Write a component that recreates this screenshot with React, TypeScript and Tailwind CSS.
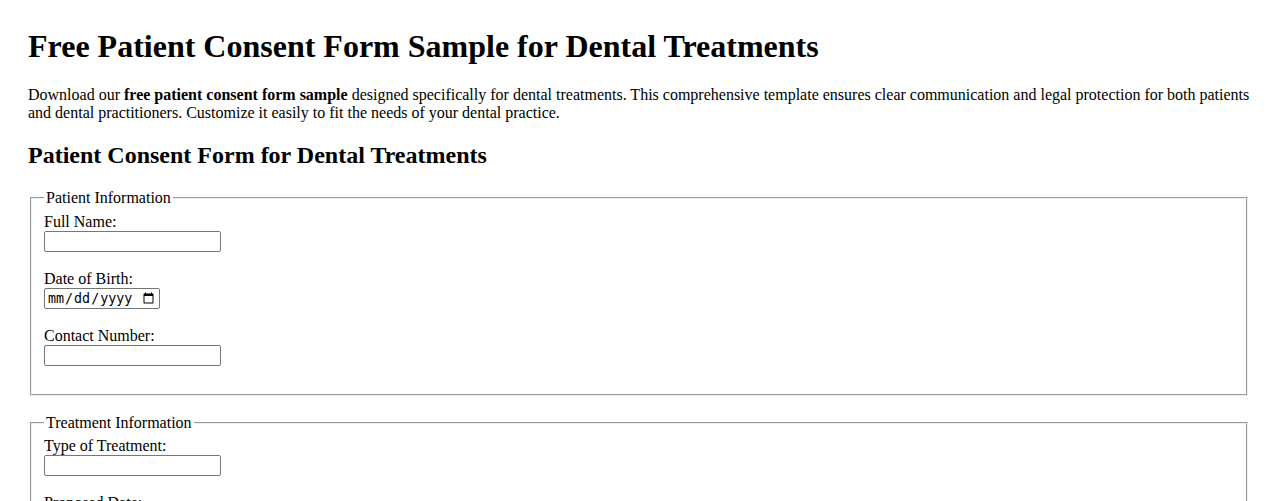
import React from "react";

const textInput =
  "inline-block align-baseline w-[177px] h-[21px] border border-[#767676] rounded-[2px] bg-white px-[2px] py-[1px] text-[13.333px] font-['Liberation_Sans',Arial,sans-serif]";
const dateInput =
  "inline-block align-baseline w-[116px] h-[21px] border border-[#767676] rounded-[2px] bg-white px-[2px] py-[1px] text-[13.333px] font-['DejaVu_Sans_Mono',monospace] text-black";
const fieldsetCls =
  "mx-[2px] border-2 [border-style:groove] border-[color:ThreeDFace] pt-[5.6px] px-[12px] pb-[10px] min-w-min";

export default function App() {
  return (
    <div className="bg-white text-black font-['Liberation_Serif','Times_New_Roman',serif] text-[16px] leading-[normal] px-[28px] pt-[28px] pb-[28px] min-h-screen">
      <h1 className="text-[32px] font-bold mb-[21.44px]">
        Free Patient Consent Form Sample for Dental Treatments
      </h1>
      <p>
        Download our <strong className="font-bold">free patient consent form sample</strong> designed
        specifically for dental treatments. This comprehensive template ensures clear communication and
        legal protection for both patients and dental practitioners. Customize it easily to fit the needs
        of your dental practice.
      </p>
      <h2 className="text-[24px] font-bold mt-[19.92px] mb-[19.92px]">
        Patient Consent Form for Dental Treatments
      </h2>
      <form>
        <fieldset className={fieldsetCls}>
          <legend className="px-[2px]">Patient Information</legend>
          <label htmlFor="fullName">Full Name:</label>
          <br />
          <input id="fullName" type="text" className={textInput} />
          <br />
          <br />
          <label htmlFor="dob">Date of Birth:</label>
          <br />
          <input id="dob" type="date" className={dateInput} />
          <br />
          <br />
          <label htmlFor="contact">Contact Number:</label>
          <br />
          <input id="contact" type="tel" className={textInput} />
          <br />
          <br />
        </fieldset>
        <br />
        <fieldset className={fieldsetCls}>
          <legend className="px-[2px]">Treatment Information</legend>
          <label htmlFor="treatment">Type of Treatment:</label>
          <br />
          <input id="treatment" type="text" className={textInput} />
          <br />
          <br />
          <label htmlFor="proposedDate">Proposed Date:</label>
          <br />
          <input id="proposedDate" type="date" className={dateInput} />
          <br />
          <br />
          <label htmlFor="dentist">Dentist Name:</label>
          <br />
          <input id="dentist" type="text" className={textInput} />
          <br />
          <br />
        </fieldset>
      </form>
    </div>
  );
}
